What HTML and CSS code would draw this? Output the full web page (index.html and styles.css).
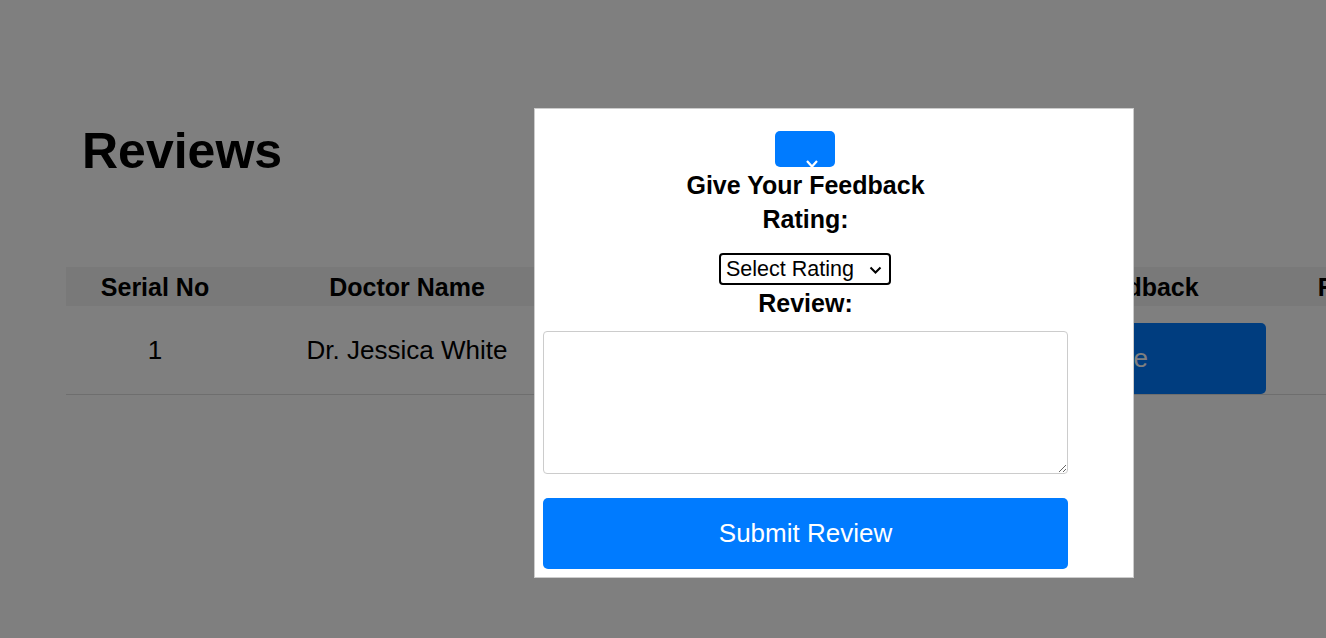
FILE: index.html
```html
<!DOCTYPE html>
<html lang="en">
<head>
<meta charset="utf-8">
<title>Reviews</title>
<link rel="stylesheet" href="styles.css">
</head>
<body>
<div class="page">
  <h1 class="title">Reviews</h1>
  <table class="reviews">
    <colgroup>
      <col class="c-serial">
      <col class="c-doctor">
      <col class="c-date">
      <col class="c-status">
      <col class="c-feedback">
      <col class="c-follow">
    </colgroup>
    <thead>
      <tr>
        <th>Serial No</th>
        <th>Doctor Name</th>
        <th>Date</th>
        <th>Status</th>
        <th>Feedback</th>
        <th>Follow Up</th>
      </tr>
    </thead>
    <tbody>
      <tr>
        <td>1</td>
        <td>Dr. Jessica White</td>
        <td>2024-05-12</td>
        <td>Completed</td>
        <td class="fb-cell"><button class="fb-btn" type="button">Update</button></td>
        <td>Yes</td>
      </tr>
    </tbody>
  </table>
</div>

<div class="overlay">
  <div class="modal">
    <form class="form">
      <button class="close" type="button" aria-label="Close">
        <svg class="close-x" width="14" height="8" viewBox="0 0 14 8"><polyline points="2,1 7,6.5 12,1" fill="none" stroke="#fff" stroke-width="2.2"/></svg>
      </button>
      <h2 class="heading">Give Your Feedback</h2>
      <label class="lbl" for="rating">Rating:</label>
      <div class="select-wrap">
        <select id="rating" class="rating">
          <option>Select Rating</option>
          <option>1</option>
          <option>2</option>
          <option>3</option>
          <option>4</option>
          <option>5</option>
        </select>
        <svg class="chev" width="13" height="8" viewBox="0 0 13 8"><polyline points="1.5,1.5 6.5,6.5 11.5,1.5" fill="none" stroke="#000" stroke-width="2"/></svg>
      </div>
      <label class="lbl lbl-review" for="review">Review:</label>
      <textarea id="review" class="review"></textarea>
      <button class="submit" type="button">Submit Review</button>
    </form>
  </div>
</div>
</body>
</html>
```

FILE: styles.css
```css
html, body {
  margin: 0;
  padding: 0;
  overflow: hidden;
  background: #fff;
  font-family: "Liberation Sans", Arial, sans-serif;
  color: #000;
}

.page {
  padding-left: 66px;
  width: 1500px;
}

.title {
  margin: 122px 0 0 16px;
  font-size: 50px;
  line-height: 58px;
  font-weight: 700;
}

.reviews {
  margin-top: 87px;
  border-collapse: collapse;
  table-layout: fixed;
  width: 1415px;
}

.c-serial { width: 178px; }
.c-doctor { width: 326px; }
.c-date { width: 219px; }
.c-status { width: 219px; }
.c-feedback { width: 266px; }
.c-follow { width: 207px; }

.reviews th {
  background: #f2f2f2;
  height: 39px;
  padding: 1px 8px 0;
  font-size: 25px;
  font-weight: 700;
  line-height: 38px;
  text-align: center;
  white-space: nowrap;
  overflow: hidden;
  box-sizing: border-box;
}

.reviews td {
  padding: 0 8px;
  font-size: 26px;
  text-align: center;
  vertical-align: middle;
  border-bottom: 1px solid #ddd;
  white-space: nowrap;
}

.reviews .fb-cell {
  padding-top: 17px;
}

.fb-btn {
  display: block;
  width: 250px;
  height: 71px;
  border: none;
  border-radius: 5px;
  background: #007bff;
  color: #fff;
  font-family: inherit;
  font-size: 26px;
  text-align: right;
  padding: 0 118px 0 0;
}

.overlay {
  position: fixed;
  inset: 0;
  background: rgba(0, 0, 0, 0.5);
}

.modal {
  box-sizing: border-box;
  margin: 108px 0 0 534px;
  width: 600px;
  background: #fff;
  border: 1px solid #ccc;
  padding: 8px;
}

.form {
  width: 525px;
  display: flex;
  flex-direction: column;
  align-items: center;
  margin: 0;
}

.close {
  position: relative;
  margin: 14px 1px 0 0;
  width: 60px;
  height: 36px;
  border: none;
  border-radius: 5px;
  background: #007bff;
  padding: 0;
  overflow: visible;
}

.close-x {
  position: absolute;
  left: 30px;
  top: 29px;
  overflow: visible;
}

.heading {
  margin: 1px 0 0;
  font-size: 25px;
  line-height: 34px;
  font-weight: 700;
}

.lbl {
  display: block;
  font-size: 25px;
  line-height: 34px;
  font-weight: 700;
}

.select-wrap {
  position: relative;
  margin: 17px 1px 0 0;
  width: 172px;
  height: 32px;
}

.rating {
  box-sizing: border-box;
  appearance: none;
  -webkit-appearance: none;
  display: block;
  width: 172px;
  height: 32px;
  border: 2px solid #000;
  border-radius: 4px;
  background: #fff;
  color: #000;
  font-family: inherit;
  font-size: 21.5px;
  padding: 0 0 0 5px;
  margin: 0;
}

.chev {
  position: absolute;
  left: 150px;
  top: 13px;
  pointer-events: none;
}

.lbl-review {
  margin-top: 1px;
}

.review {
  box-sizing: border-box;
  margin-top: 11px;
  width: 525px;
  height: 143px;
  border: 1px solid #ccc;
  border-radius: 4px;
  font-family: inherit;
}

.submit {
  margin-top: 24px;
  width: 525px;
  height: 71px;
  border: none;
  border-radius: 5px;
  background: #007bff;
  color: #fff;
  font-family: inherit;
  font-size: 26px;
}
```
